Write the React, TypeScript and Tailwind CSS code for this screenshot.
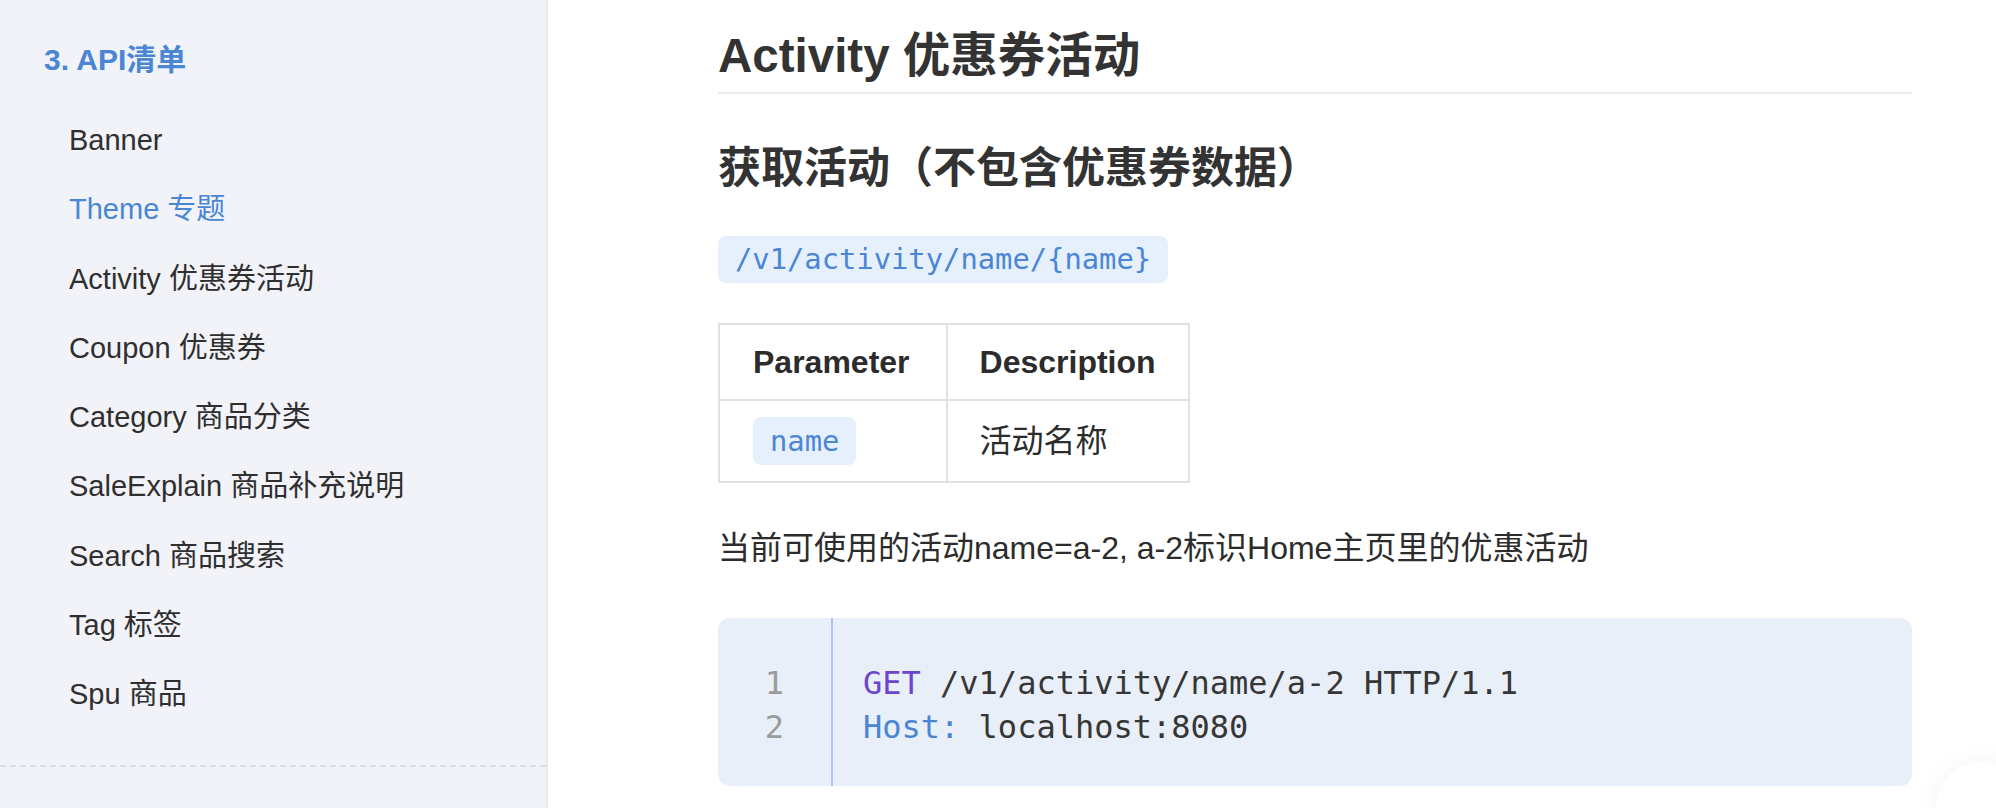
import React from "react"

const SANS = { fontFamily: '"Liberation Sans", "Noto Sans CJK SC", sans-serif' }

const NAV = [
  { label: "Banner" },
  { label: "Theme 专题", active: true },
  { label: "Activity 优惠券活动" },
  { label: "Coupon 优惠券" },
  { label: "Category 商品分类" },
  { label: "SaleExplain 商品补充说明" },
  { label: "Search 商品搜索" },
  { label: "Tag 标签" },
  { label: "Spu 商品" },
]

function Sidebar() {
  return (
    <aside className="w-[548px] h-full shrink-0 bg-[#f2f3f8] border-r-2 border-[#e8e9ef] flex flex-col">
      <div className="pt-[40px] pl-[44px] text-[30px] leading-[40px] font-bold text-[#4a86d4]">3. API清单</div>
      <ul className="mt-[26px] flex flex-col">
        {NAV.map(item => (
          <li
            key={item.label}
            className={`pl-[69px] text-[29px] leading-[69.3px] ${item.active ? "text-[#4a86d4]" : "text-[#2f2f2f]"}`}
          >
            {item.label}
          </li>
        ))}
      </ul>
      <div className="mt-[35px] border-t-2 border-dashed border-[#dcdde3]" />
    </aside>
  )
}

function InlineCode({ children }: { children: React.ReactNode }) {
  return (
    <code
      className="inline-block h-[47px] px-[17px] rounded-[8px] bg-[#e6f0fd] text-[#4a86d4] text-[28.8px] leading-[47px] align-top"
      style={{ fontFamily: '"DejaVu Sans Mono", monospace' }}
    >
      {children}
    </code>
  )
}

function CodeBlock() {
  const mono = { fontFamily: '"DejaVu Sans Mono", monospace' }
  return (
    <div className="mt-[46px] w-full h-[168px] rounded-[12px] bg-[#e9eff8] flex text-[32px] leading-[44px]" style={mono}>
      <div className="w-[115px] shrink-0 border-r-2 border-[#aac6ef] pt-[43px] pb-[37px] flex flex-col items-center text-[#9b9b9b]">
        <span>1</span>
        <span>2</span>
      </div>
      <pre className="pl-[30px] pt-[43px] pb-[37px] text-[#363636]" style={mono}>
        <div>
          <span className="text-[#6b46cf]">GET</span> /v1/activity/name/a-2 HTTP/1.1
        </div>
        <div>
          <span className="text-[#4a86d4]">Host:</span> localhost:8080
        </div>
      </pre>
    </div>
  )
}

export default function App() {
  return (
    <div className="w-[1996px] h-[808px] overflow-hidden bg-white flex relative" style={SANS}>
      <Sidebar />
      <main className="flex-1 pl-[170px]">
        <div className="w-[1194px] flex flex-col">
          <h2 className="mt-[26px] pb-[6px] border-b-2 border-[#ebebef] text-[47.5px] leading-[60px] font-bold text-[#333]">
            Activity 优惠券活动
          </h2>
          <h3 className="mt-[46px] text-[43px] leading-[56px] font-bold text-[#333]">获取活动（不包含优惠券数据）</h3>
          <div className="mt-[40px] h-[47px]">
            <InlineCode>/v1/activity/name/{"{name}"}</InlineCode>
          </div>
          <table className="mt-[40px] border-collapse self-start text-[32px] text-[#2c2c2c]">
            <thead>
              <tr>
                <th className="border-2 border-[#dfe1e6] pl-[33px] pr-[36px] py-[19px] leading-[36px] text-left font-bold">
                  Parameter
                </th>
                <th className="border-2 border-[#dfe1e6] px-[32px] py-[19px] leading-[36px] text-left font-bold">
                  Description
                </th>
              </tr>
            </thead>
            <tbody>
              <tr>
                <td className="border-2 border-[#dfe1e6] pl-[33px] pr-[36px] py-[16px] leading-[48px]">
                  <code
                    className="inline-block h-[48px] px-[17px] rounded-[8px] bg-[#e6f0fd] text-[#4a86d4] text-[28.8px] leading-[48px] align-top"
                    style={{ fontFamily: '"DejaVu Sans Mono", monospace' }}
                  >
                    name
                  </code>
                </td>
                <td className="border-2 border-[#dfe1e6] px-[32px] py-[16px] leading-[48px]">活动名称</td>
              </tr>
            </tbody>
          </table>
          <p className="mt-[41px] text-[32px] leading-[48px] text-[#2c2c2c]">
            当前可使用的活动name=a-2, a-2标识Home主页里的优惠活动
          </p>
          <CodeBlock />
        </div>
      </main>
      <div className="absolute right-[-30px] bottom-[-44px] w-[90px] h-[90px] rounded-full bg-white shadow-[0_0_24px_rgba(0,0,0,0.05)]" />
    </div>
  )
}
